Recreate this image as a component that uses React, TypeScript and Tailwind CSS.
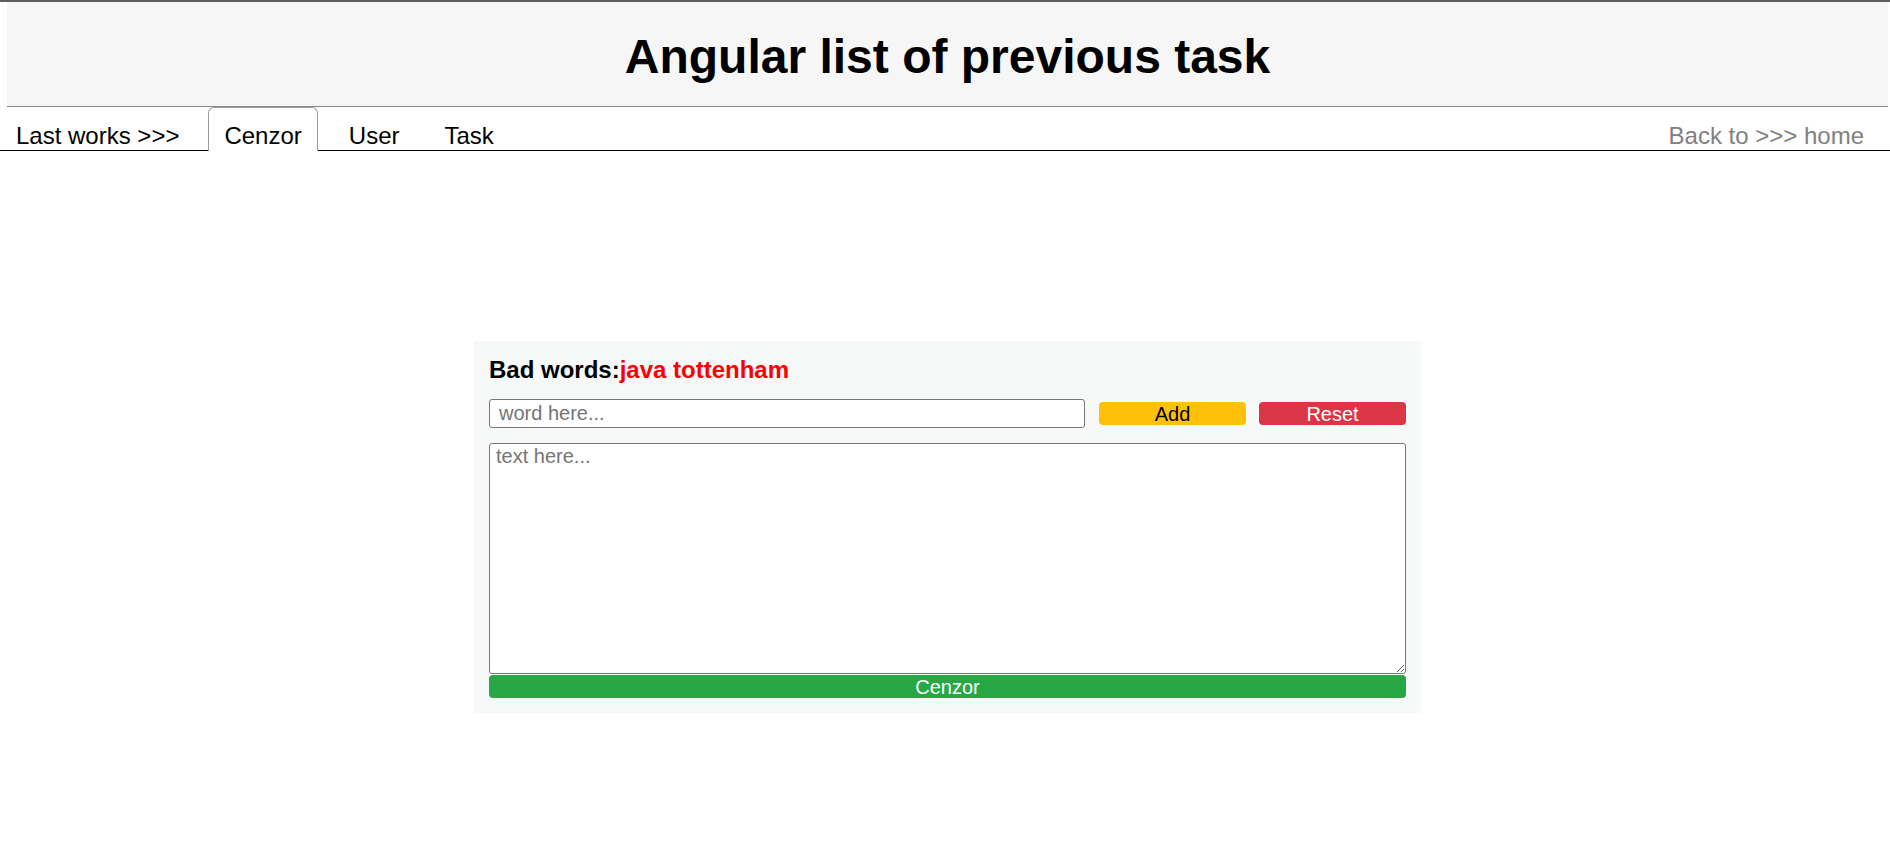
import { useState } from "react";

const tabs = ["Cenzor", "User", "Task"];

function Header() {
  return (
    <div className="w-full border-t-2 border-[#5f5f5f]">
      <div className="ml-[7px] mr-[2px] h-[105px] bg-[#f6f6f6] border-b border-[#888] flex items-center justify-center pt-[4px]">
        <h1 className="text-[48px] font-bold text-black">Angular list of previous task</h1>
      </div>
    </div>
  );
}

function TabBar() {
  const [active] = useState("Cenzor");
  return (
    <nav className="flex h-[44px] border-b border-black text-[24px]">
      <span className="flex items-end ml-[16px] text-black">Last works &gt;&gt;&gt;</span>
      {tabs.map((t) =>
        t === active ? (
          <a
            key={t}
            className="flex items-end ml-[29px] -mb-px pb-px px-[15px] bg-white border border-b-0 border-[#9a9a9a] rounded-t-[6px] text-black"
          >
            {t}
          </a>
        ) : (
          <a key={t} className={`flex items-end text-black ${t === "User" ? "ml-[31px]" : "ml-[45px]"}`}>
            {t}
          </a>
        )
      )}
      <a className="flex items-end ml-auto mr-[26px] text-[#808080]">Back to &gt;&gt;&gt; home</a>
    </nav>
  );
}

function CenzorCard() {
  const [words] = useState(["java", "tottenham"]);
  return (
    <div className="w-[947px] bg-[#f7f8f8] p-[15px]">
      <h3 className="text-[24px] font-bold text-black">
        Bad words:<span className="text-[#ff0000]">{words.join(" ")}</span>
      </h3>
      <div className="mt-[15px] flex items-center h-[29px]">
        <input
          type="text"
          placeholder="word here..."
          className="w-[596px] h-[29px] border border-[#767676] rounded-[3px] bg-white pl-[9px] text-[20px] placeholder:text-[#757575] outline-none"
        />
        <button className="ml-[14px] w-[147px] h-[23px] rounded-[4px] bg-[#ffc107] text-black text-[20px] leading-none flex items-center justify-center">
          Add
        </button>
        <button className="ml-[13px] w-[147px] h-[23px] rounded-[4px] bg-[#dc3545] text-white text-[20px] leading-none flex items-center justify-center">
          Reset
        </button>
      </div>
      <textarea
        placeholder="text here..."
        className="mt-[15px] block w-full h-[231px] border border-[#767676] rounded-[3px] bg-white px-[6px] pt-px text-[20px] placeholder:text-[#757575] outline-none"
      />
      <button className="mt-px block w-full h-[23px] rounded-[4px] bg-[#28a745] text-white text-[20px] leading-none">
        Cenzor
      </button>
    </div>
  );
}

export default function App() {
  return (
    <div className="min-h-[853px] bg-white leading-[normal] font-['Liberation_Sans',Arial,sans-serif]">
      <Header />
      <TabBar />
      <main className="flex justify-center pl-[5px] pt-[190px]">
        <CenzorCard />
      </main>
    </div>
  );
}
